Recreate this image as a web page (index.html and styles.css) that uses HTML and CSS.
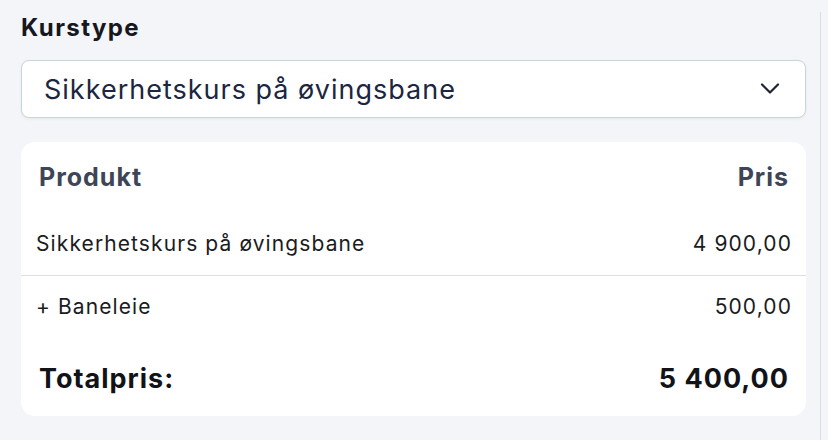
FILE: index.html
```html
<!DOCTYPE html>
<html lang="no">
<head>
    <meta charset="UTF-8">
    <title>Kurstype</title>
    <link rel="stylesheet" href="styles.css">
</head>
<body>
    <div class="panel">
        <div class="field">
            <label class="field-label" for="kurstype">Kurstype</label>
            <div class="select">
                <span class="select-value">Sikkerhetskurs på øvingsbane</span>
                <svg class="chevron" width="20" height="20" viewBox="0 0 20 20">
                    <path d="M2 5.5l8 8 8-8" fill="none" stroke="#1f2430" stroke-width="2.2" stroke-linecap="round" stroke-linejoin="round"/>
                </svg>
            </div>
        </div>

        <div class="summary">
            <div class="summary-head">
                <span>Produkt</span>
                <span>Pris</span>
            </div>
            <div class="line">
                <span>Sikkerhetskurs på øvingsbane</span>
                <span>4 900,00</span>
            </div>
            <div class="line no-border">
                <span>+ Baneleie</span>
                <span>500,00</span>
            </div>
            <div class="total">
                <span>Totalpris:</span>
                <span>5 400,00</span>
            </div>
        </div>
    </div>
</body>
</html>
```

FILE: styles.css
```css
body {
    margin: 0;
    background: #f3f5f9;
    font-family: Inter, "Noto Sans", Arial, sans-serif;
    color: #16181d;
}
.panel {
    width: 785px;
    margin-top: 12px;
    padding: 1px 14px 24px 21px;
    border-right: 1px solid #d9dbe0;
    min-height: 403px;
    box-sizing: content-box;
}
.field {
    margin-bottom: 24px;
}
.field-label {
    display: block;
    font-size: 24px;
    font-weight: 700;
    letter-spacing: 1.4px;
    line-height: 30px;
    margin-bottom: 17px;
    color: #16181d;
}
.select {
    display: flex;
    align-items: center;
    justify-content: space-between;
    height: 56px;
    padding: 0 25px 0 22px;
    background: white;
    border: 1px solid #c9d6d6;
    border-radius: 8px;
    box-shadow: 0 1px 3px rgba(0,0,0,0.06);
}
.select-value {
    font-size: 27px;
    letter-spacing: 1px;
    color: #1c2640;
}
.chevron {
    display: block;
}
.summary {
    background: white;
    border-radius: 14px;
    padding-bottom: 22px;
}
.summary-head {
    display: flex;
    justify-content: space-between;
    padding: 20px 17px 21px 18px;
    font-size: 25px;
    font-weight: 700;
    letter-spacing: 1px;
    line-height: 30px;
    color: #3d4556;
}
.line {
    display: flex;
    justify-content: space-between;
    padding: 16px 14px 16px 15px;
    font-size: 21px;
    letter-spacing: 1.1px;
    line-height: 30px;
    color: #1a1c22;
    border-bottom: 1px solid #dcdee2;
}
.line.no-border {
    border-bottom: none;
}
.total {
    display: flex;
    justify-content: space-between;
    padding: 26px 17px 0 18px;
    font-size: 27px;
    font-weight: 700;
    letter-spacing: 1px;
    line-height: 30px;
    color: #111318;
}
```
